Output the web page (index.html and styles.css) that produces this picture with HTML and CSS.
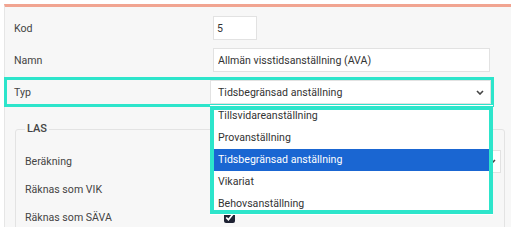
FILE: index.html
```html
<!DOCTYPE html>
<html>
<head>
   <title>Anställningsform</title>
<link rel="stylesheet" href="styles.css"></head>
<body>
<div class="panel">
<div class="row">
<label class="lbl" for="kod">Kod</label>
<input type="text" class="inp kod" id="kod" value="5">
</div>
<div class="row">
<label class="lbl" for="namn">Namn</label>
<input type="text" class="inp namn" id="namn" value="Allmän visstidsanställning (AVA)">
</div>
<div class="row typ">
<label class="lbl">Typ</label>
<div class="select typsel">
<span>Tidsbegränsad anställning</span>
<svg class="chev" width="8" height="5" viewBox="0 0 8 5"><path d="M1 1 L4 4 L7 1" fill="none" stroke="#444" stroke-width="1.6"/></svg>
<ul class="dropdown">
<li>Tillsvidareanställning</li>
<li>Provanställning</li>
<li class="sel">Tidsbegränsad anställning</li>
<li>Vikariat</li>
<li>Behovsanställning</li>
</ul>
</div>
</div>
<fieldset class="group">
<legend>LAS</legend>
<div class="frow">
<label class="flbl">Beräkning</label>
<div class="select bersel">
<span></span>
<svg class="chev" width="8" height="5" viewBox="0 0 8 5"><path d="M1 1 L4 4 L7 1" fill="none" stroke="#444" stroke-width="1.6"/></svg>
</div>
</div>
<div class="frow">
<label class="flbl">Räknas som VIK</label>
<input type="checkbox" class="chk" checked>
</div>
<div class="frow">
<label class="flbl">Räknas som SÄVA</label>
<input type="checkbox" class="chk" checked>
</div>
</fieldset>
</div>
</body>
</html>
```
FILE: styles.css
```css
body{
   margin:0;
   background:#fff;
   font-family: Roboto, "Liberation Sans", sans-serif;
   font-size:10.6px;
   color:#444;
}
.panel{
   margin:4px 0 0 4px;
   border-top:3px solid #f1a491;
   border-left:1px solid #e6e6e6;
   background:#f7f7f7;
   padding:9px 0 0 9px;
   height:240px;
}
.row{display:flex;align-items:center;height:24px;margin-bottom:8px;}
.lbl{width:199px;flex:none;}
.inp{
   box-sizing:border-box;height:24px;
   border:1px solid #e2e2e2;background:#fff;
   padding:0 4px;font:inherit;color:#333;outline:none;
}
.kod{width:44px;padding-left:3px;}
.namn{width:277px;}
.typ{
   position:relative;
   box-sizing:border-box;
   width:484px;
   margin-left:-7px;padding-left:7px;
   outline:3px solid #2de5cb;
}
.select{
   position:relative;
   box-sizing:border-box;
   display:flex;align-items:center;justify-content:space-between;
   height:24px;background:#fff;border:1px solid #e2e2e2;
   color:#333;
}
.typsel{flex:1;margin-left:-3px;padding:0 6px 0 7px;}
.dropdown{
   position:absolute;top:24px;left:-1px;
   width:283px;margin:0;padding:0;list-style:none;
   background:#fff;z-index:2;
}
.dropdown li{height:22px;line-height:22px;padding-left:8px;color:#333;}
.dropdown li.sel{background:#1a66d2;color:#fff;}
.dropdown::after{
   content:"";position:absolute;
   top:1px;bottom:1px;left:0;right:0;
   border:4px solid #2de5cb;
}
.group{
   margin:18px 6px 0 1px;
   padding:13px 0 0 9px;
   border:1px solid #e3e3e3;border-radius:3px;
}
.group legend{
   padding:0 2px 2px;
   font-size:11px;font-weight:500;color:#444;
}
.frow{display:flex;align-items:center;height:23px;margin-bottom:5px;}
.flbl{width:188px;flex:none;}
.bersel{width:288px;height:23px;padding:0 4px 0 7px;}
.chk{
   width:11px;height:11px;margin:0 0 0 11px;
   accent-color:#1e2233;
}
```
